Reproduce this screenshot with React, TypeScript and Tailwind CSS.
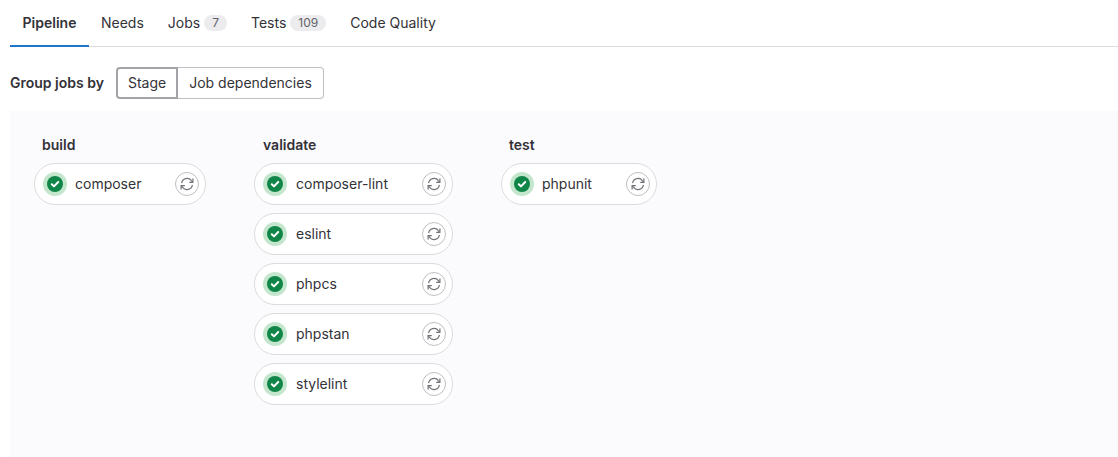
const RetryIcon = () => (
  <svg viewBox="0 0 16 16" className="h-4 w-4 fill-none stroke-[#737278] stroke-[1.2]">
    <path d="M2.6 7.2A5.5 5.5 0 0 1 12.4 4.6L13.6 6" />
    <path d="M13.4 8.8A5.5 5.5 0 0 1 3.6 11.4L2.4 10" />
    <path d="M13.9 2.6v3.7h-3.7" />
    <path d="M2.1 13.4V9.7h3.7" />
  </svg>
);

const StatusIcon = () => (
  <span className="flex h-6 w-6 shrink-0 items-center justify-center rounded-full bg-[#c3e6cd]">
    <span className="flex h-4 w-4 items-center justify-center rounded-full bg-[#108548]">
      <svg viewBox="0 0 16 16" className="h-4 w-4 fill-none stroke-white stroke-2">
        <path d="M4.8 8.2l2.2 2.2 4.2-4.4" strokeLinecap="round" strokeLinejoin="round" />
      </svg>
    </span>
  </span>
);

function Job({ name, width, nameClass }: { name: string; width: string; nameClass: string }) {
  return (
    <div className={`flex h-[42px] items-center rounded-[21px] border border-[#dcdcde] bg-white pl-[8px] pr-[6px] ${width}`}>
      <StatusIcon />
      <span className={`grow text-sm text-[#333238] ${nameClass}`}>{name}</span>
      <span className="flex h-6 w-6 items-center justify-center rounded-full border border-[#bfbfc3] bg-white">
        <RetryIcon />
      </span>
    </div>
  );
}

function Stage({
  title,
  jobs,
  width,
  className,
  titleClass,
  nameClass,
}: {
  title: string;
  jobs: string[];
  width: string;
  className: string;
  titleClass: string;
  nameClass: string;
}) {
  return (
    <div className={className}>
      <h3 className={`mb-[8px] text-sm leading-5 font-semibold text-[#333238] ${titleClass}`}>{title}</h3>
      <div className="flex flex-col gap-2">
        {jobs.map((job) => (
          <Job key={job} name={job} width={width} nameClass={nameClass} />
        ))}
      </div>
    </div>
  );
}

function Tab({ label, count }: { label: string; count?: string }) {
  return (
    <div className="flex h-[46px] items-center px-3 text-sm text-[#333238]">
      {label}
      {count && (
        <span className="ml-1 rounded-full bg-[#ececef] px-[8px] text-xs leading-4 text-[#626168]">{count}</span>
      )}
    </div>
  );
}

export default function App() {
  return (
    <div className="h-[457px] overflow-hidden bg-white pl-[10px] font-['Inter',sans-serif]">
      <div className="flex h-[47px] border-b border-[#dcdcde]">
        <div className="flex h-[47px] w-[79px] items-center justify-center border-b-2 border-[#1f75cb] text-sm font-semibold text-[#333238]">
          Pipeline
        </div>
        <Tab label="Needs" />
        <Tab label="Jobs" count="7" />
        <Tab label="Tests" count="109" />
        <Tab label="Code Quality" />
      </div>

      <div className="flex h-[64px] items-center pt-[8px]">
        <span className="mr-3 text-sm font-semibold text-[#333238]">Group jobs by</span>
        <div className="flex h-8 text-sm text-[#333238]">
          <span className="flex items-center rounded-l border-2 border-[#a4a3a8] bg-white px-[10px]">Stage</span>
          <span className="flex items-center rounded-r border border-l-0 border-[#bfbfc3] bg-white px-[11px]">Job dependencies</span>
        </div>
      </div>

      <div className="flex h-[346px] bg-[#fbfafd] pt-[24px] pl-[24px]">
        <Stage title="build" jobs={["composer"]} width="w-[172px]" className="" titleClass="pl-[8px]" nameClass="ml-[8px]" />
        <Stage
          title="validate"
          jobs={["composer-lint", "eslint", "phpcs", "phpstan", "stylelint"]}
          width="w-[199px]"
          className="ml-[48px]"
          titleClass="pl-[9px]"
          nameClass="ml-[9px]"
        />
        <Stage title="test" jobs={["phpunit"]} width="w-[156px]" className="ml-[48px]" titleClass="pl-[8px]" nameClass="ml-[8px]" />
      </div>
    </div>
  );
}
